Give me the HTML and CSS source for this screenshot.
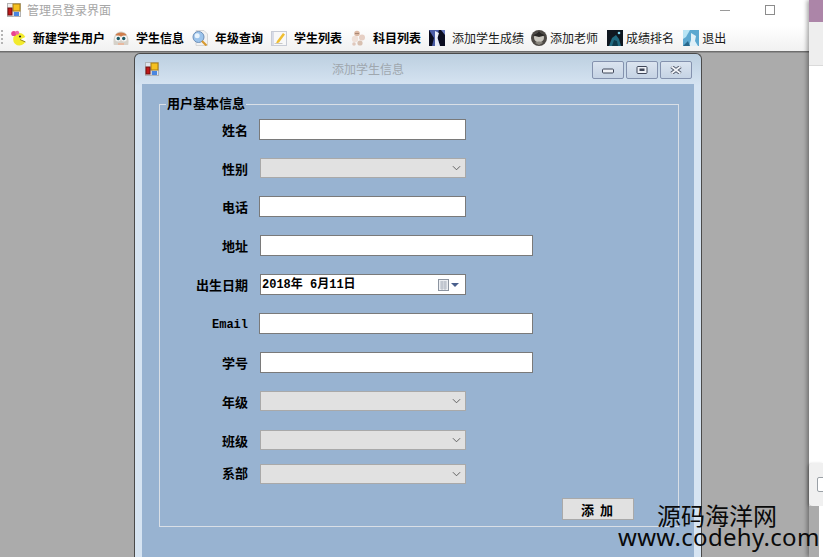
FILE: index.html
```html
<!DOCTYPE html>
<html lang="zh">
<head>
<meta charset="utf-8">
<title>管理员登录界面</title>
<link rel="stylesheet" href="styles.css">
</head>
<body>
<div class="screen">
  <div class="app">
    <header class="titlebar">
      <svg class="app-icon" viewBox="0 0 14 14"><rect x=".5" y=".5" width="13" height="13" fill="#efefef" stroke="#b4b4b4"/><path d="M0 7h14M7 0v14" stroke="#c8c8c8"/><rect x="6" y="1" width="7" height="7" fill="#f5c020" stroke="#a87c10"/><rect x="1" y="5" width="4" height="7" fill="#c01818" stroke="#701010"/><rect x="7" y="9" width="5" height="4" fill="#4a86e0"/></svg>
      <span class="app-title">管理员登录界面</span>
      <span class="winctl">
        <span class="wc-min"></span>
        <span class="wc-max"></span>
      </span>
    </header>
    <nav class="toolbar">
      <span class="grip"></span>
      <a class="tool b t1"><svg class="ti" viewBox="0 0 16 16"><path d="M8.500 3a6.300 6.300 0 1 1-.1 12.600A6.300 6.300 0 0 1 8.500 3z" fill="#f2ea2c"/><path d="M9 9.500l6.500-3v5.500z" fill="#fff"/><path d="M9 9.500l5.500 2.500" stroke="#7a6a10" stroke-width=".8"/><circle cx="2.800" cy="3.500" r="2.600" fill="#e9448f"/><circle cx="6.200" cy="2.800" r="2" fill="#f06aa8"/><circle cx="9" cy="6.500" r="1.100" fill="#222"/></svg>新建学生用户</a>
      <a class="tool b t2"><svg class="ti" viewBox="0 0 16 16"><path d="M.8 15C-.5 8 2 1.500 8 1.500S16.500 8 15.200 15z" fill="#d6d2ca"/><path d="M2.500 5C4 1.500 12 1.500 13.500 5l-3 1.500H5.500z" fill="#cf7d4d"/><circle cx="5" cy="8.500" r="3" fill="#f5f5f5"/><circle cx="11" cy="8.500" r="3" fill="#f5f5f5"/><circle cx="5.300" cy="8.500" r="1.700" fill="#1b5a66"/><circle cx="10.700" cy="8.500" r="1.700" fill="#1b5a66"/><path d="M5 13h6v2H5z" fill="#e8b9a0"/></svg>学生信息</a>
      <a class="tool b t3"><svg class="ti" viewBox="0 0 16 16"><path d="M4 .5h8l3.500 3.500v11.500H4z" fill="#f2f2f2" stroke="#c8c8c8" stroke-width=".7"/><circle cx="6.500" cy="7" r="5.500" fill="#9cc4ec" stroke="#6f90b8"/><circle cx="5.200" cy="5.700" r="2.500" fill="#e8f3fc"/><path d="M10 11l4.500 4.500" stroke="#d89a30" stroke-width="2.200"/></svg>年级查询</a>
      <a class="tool b t4"><svg class="ti" viewBox="0 0 16 16"><rect x=".5" y="1.500" width="15" height="14" fill="#f8f8f8" stroke="#c8ccd6"/><rect x="1" y="2" width="2" height="13" fill="#d8dce8"/><path d="M6 11l6-8 2 1.500-6 8-3 1z" fill="#f0be30"/><path d="M3.500 13.500h8" stroke="#c8c8c8"/></svg>学生列表</a>
      <a class="tool b t5"><svg class="ti" viewBox="0 0 16 16"><circle cx="7" cy="3.500" r="2.800" fill="#dcb9a4"/><circle cx="12" cy="7.500" r="3" fill="#e6cfc4"/><circle cx="5" cy="9" r="3.200" fill="#efe0d8"/><circle cx="10" cy="13" r="2.600" fill="#d8c0b0"/><circle cx="4" cy="14" r="1.800" fill="#e0c8bc"/><circle cx="6" cy="3.500" r=".6" fill="#6a4a3a"/><circle cx="8" cy="3.500" r=".6" fill="#6a4a3a"/></svg>科目列表</a>
      <a class="tool t6"><svg class="ti" viewBox="0 0 16 16"><rect width="16" height="16" fill="#0b0d20"/><path d="M0 0h10L8 6l3 10H3l2-8z" fill="#4a5ca6"/><path d="M6 1l4 2-1.500 5L11 16H6z" fill="#e8ecf8"/><path d="M12 0h4v5z" fill="#6a7cc0"/></svg>添加学生成绩</a>
      <a class="tool t7"><svg class="ti" viewBox="0 0 16 16"><circle cx="8" cy="8" r="8" fill="#4d4945"/><circle cx="8" cy="7.500" r="5" fill="#c9c6be"/><path d="M2 5.500l6-4 6 4-6 1.500z" fill="#2a2826"/><path d="M4 13c2-2 6-2 8 0l-4 2z" fill="#8a867e"/></svg>添加老师</a>
      <a class="tool t8"><svg class="ti" viewBox="0 0 16 16"><rect width="16" height="16" fill="#101820"/><path d="M2 16l3-8 4-3 3 4 2 7z" fill="#1f6a80"/><path d="M5 16l2-6 3 1 1 5z" fill="#0d3a4a"/><circle cx="12" cy="3" r="1.300" fill="#80d8f0"/></svg>成绩排名</a>
      <a class="tool t9"><svg class="ti" viewBox="0 0 16 16"><rect width="16" height="16" fill="#5ca8d0"/><path d="M0 0h7L3 7 0 9z" fill="#b8e4f4"/><path d="M8 3l5 3-1 5 3 5H6l2-6z" fill="#e0f0f8"/><path d="M0 16l5-5 2 5z" fill="#28688c"/></svg>退出</a>
    </nav>
    <main class="mdi">
      <section class="child">
        <div class="child-title">
          <svg class="child-icon" viewBox="0 0 14 14"><rect x=".5" y=".5" width="13" height="13" fill="#dfe5ec" stroke="#b0b4b8"/><path d="M0 7h14M7 0v14" stroke="#b8bcc0"/><rect x="6" y="1" width="7" height="7" fill="#f5c020" stroke="#a87c10"/><rect x="1" y="5" width="4" height="7" fill="#c01818" stroke="#701010"/><rect x="7" y="9" width="5" height="4" fill="#4a86e0"/></svg>
          <span class="child-name">添加学生信息</span>
          <span class="caption">
            <span class="capbtn"><svg viewBox="0 0 12 8"><rect x=".5" y="3" width="11" height="4" rx="1" fill="#eef1f6" stroke="#3f4658"/></svg></span>
            <span class="capbtn"><svg viewBox="0 0 12 8"><rect x="1" y=".5" width="10" height="7" rx="1" fill="#eef1f6" stroke="#3f4658"/><rect x="3.500" y="2.500" width="5" height="2.500" fill="#3f4658"/></svg></span>
            <span class="capbtn"><svg viewBox="0 0 12 8"><path d="M1.500 .5l9 7M10.500 .5l-9 7" stroke="#50586a" stroke-width="3.600"/><path d="M1.500 .5l9 7M10.500 .5l-9 7" stroke="#f2f4f8" stroke-width="1.800"/></svg></span>
          </span>
        </div>
        <div class="client">
          <fieldset class="group">
            <legend>用户基本信息</legend>
            <div class="form">
              <label>姓名</label><span class="input short"></span>
              <label>性别</label><span class="select"><svg viewBox="0 0 10 6"><path d="M1 1l4 4 4-4" fill="none" stroke="#555"/></svg></span>
              <label>电话</label><span class="input short"></span>
              <label>地址</label><span class="input long"></span>
              <label>出生日期</label><span class="input date"><span class="date-text">2018年 6月11日</span><svg class="cal" viewBox="0 0 11 12"><rect x=".5" y=".5" width="10" height="11" fill="#eceef2" stroke="#8c94a0"/><path d="M2 3h7M2 5h7M2 7h7M2 9h7M4 2v9M7 2v9" stroke="#aab0bc" stroke-width=".8"/></svg><svg class="drop" viewBox="0 0 8 4"><path d="M0 0h8L4 4z" fill="#4a5f8c"/></svg></span>
              <label class="mono">Email</label><span class="input wide"></span>
              <label>学号</label><span class="input long"></span>
              <label>年级</label><span class="select"><svg viewBox="0 0 10 6"><path d="M1 1l4 4 4-4" fill="none" stroke="#555"/></svg></span>
              <label>班级</label><span class="select"><svg viewBox="0 0 10 6"><path d="M1 1l4 4 4-4" fill="none" stroke="#555"/></svg></span>
              <label class="low">系部</label><span class="select"><svg viewBox="0 0 10 6"><path d="M1 1l4 4 4-4" fill="none" stroke="#555"/></svg></span>
            </div>
            <div class="actions"><button class="add" type="button">添 加</button></div>
          </fieldset>
        </div>
      </section>
    </main>
  </div>
  <aside class="side">
    <div class="side-top"></div>
    <div class="side-strip"></div>
    <div class="side-fill"></div>
    <div class="side-card"><span class="check"></span></div>
    <div class="side-bottom"></div>
  </aside>
  <div class="watermark"><div class="wm-cn">源码海洋网</div><div class="wm-en">www.codehy.com</div></div>
</div>
</body>
</html>
```

FILE: styles.css
```css
* { box-sizing: border-box; }
html, body { margin: 0; padding: 0; width: 823px; height: 557px; overflow: hidden; background: #fff; }
.screen { position: relative; display: flex; width: 823px; height: 557px; overflow: hidden; font-family: "Noto Sans CJK SC", "Liberation Sans", sans-serif; }
.app { width: 809px; height: 557px; flex: none; display: flex; flex-direction: column; }
.titlebar { height: 26px; flex: none; display: flex; align-items: center; background: #fff; padding: 0 0 6px 7px; }
.app-icon { width: 14px; height: 14px; }
.app-title { margin-left: 6px; font-size: 12px; line-height: 16px; color: #a6a6a6; }
.winctl { margin-left: auto; display: flex; align-items: center; margin-right: 34px; }
.wc-min { width: 10px; height: 1px; background: #9a9a9a; margin-right: 35px; }
.wc-max { width: 10px; height: 10px; border: 1px solid #8c8c8c; }
.toolbar { height: 26px; flex: none; display: flex; align-items: center; padding: 0 0 2px 1px; background: linear-gradient(#ffffff, #f1f1f1); border-bottom: 1px solid #6d6d6d; box-shadow: 0 1px 0 #8d8d8d; position: relative; }
.grip { width: 2px; height: 16px; margin-right: 8px; background: repeating-linear-gradient(#b4b4b4 0 2px, transparent 2px 4px); }
.tool { display: flex; align-items: center; font-size: 12px; line-height: 16px; color: #1a1a1a; white-space: nowrap; }
.tool.b { color: #000; font-weight: 700; }
.ti { width: 16px; height: 16px; flex: none; margin-right: 7px; }
.t1 .ti { margin-right: 6px; }
.t2, .t3, .t4, .t5, .t6 { margin-left: 8px; }
.t7 { margin-left: 7px; }
.t8, .t9 { margin-left: 9px; }
.t7 .ti, .t8 .ti, .t9 .ti { margin-right: 3px; }
.mdi { flex: 1; background: #ababab; padding: 1px 0 0 134px; overflow: hidden; }
.child { width: 568px; height: 520px; background: linear-gradient(#bccfe0 0, #d6e4f2 32px, #d6e4f2 100%); border: 1px solid #4a4a4a; border-bottom: 0; border-radius: 6px 6px 0 0; padding: 0 7px; display: flex; flex-direction: column; }
.child-title { height: 30px; flex: none; display: flex; align-items: center; margin: 0 0 0 2px; position: relative; }
.child-icon { width: 14px; height: 14px; margin-left: 1px; }
.child-name { position: absolute; left: 188px; top: 7px; font-size: 12px; line-height: 16px; color: #9fa7ae; }
.caption { margin-left: auto; display: flex; gap: 2px; margin-right: 2px; margin-top: 2px; }
.capbtn { width: 32px; height: 18px; border: 1px solid #8492ae; border-radius: 2px; background: linear-gradient(#dbe4ef, #c5d3e4); display: flex; align-items: center; justify-content: center; }
.capbtn svg { width: 12px; height: 8px; }
.client { flex: 1; background: #98b3d1; padding: 20px 14px 0 17px; }
.group { margin: 0; width: 520px; height: 423px; border: 1px solid #d9dfe6; padding: 0; position: relative; }
.group legend { position: absolute; left: 6px; top: -10px; padding: 0 1px; background: #98b3d1; font-size: 13px; font-weight: 700; line-height: 16px; color: #000; }
.form { display: grid; grid-template-columns: 88px auto; grid-template-rows: 39px 38px 39px 39px 39px 39px 39px 39px 34px 20px; column-gap: 11px; padding-top: 14px; justify-items: start; align-items: start; }
.form label { justify-self: end; font-size: 13px; font-weight: 700; line-height: 21px; color: #000; white-space: nowrap; }
.form label.mono { font-family: "Liberation Mono", monospace; font-size: 12px; line-height: 25px; }
.form label.low { line-height: 18px; }
.input { display: flex; align-items: center; height: 21px; background: #fff; border: 1px solid #7a7a7a; }
.short { width: 207px; }
.wide { width: 274px; }
.long { width: 273px; margin-left: 1px; }
.select { display: flex; align-items: center; justify-content: flex-end; width: 206px; height: 20px; background: #e1e1e1; border: 1px solid #a9a9a9; padding-right: 2px; margin-left: 1px; }
.select svg { width: 9px; height: 6px; margin-right: 2px; }
.date { margin-left: 1px; width: 206px; padding: 0 6px 0 1px; }
.date-text { font-family: "Liberation Mono", "Noto Sans CJK SC", monospace; font-size: 12px; font-weight: 700; line-height: 16px; color: #000; white-space: nowrap; }
.cal { width: 11px; height: 12px; margin-left: auto; }
.drop { width: 8px; height: 4px; margin-left: 2px; }
.actions { display: flex; justify-content: flex-end; padding: 14px 44px 0 0; }
.add { width: 72px; height: 22px; padding: 0 2px 0 0; background: #e1e1e1; border: 1px solid #a9a9a9; font-family: "Noto Sans CJK SC", sans-serif; font-size: 13px; font-weight: 700; word-spacing: 3px; color: #000; }
.side { width: 14px; flex: none; display: flex; flex-direction: column; box-shadow: -2px 0 4px rgba(0,0,0,.35); position: relative; z-index: 1; }
.side-top { height: 22px; background: #ac85a8; }
.side-strip { height: 44px; background: #eeeeee; border-bottom: 1px solid #dadada; }
.side-fill { height: 397px; background: #fff; }
.side-card { height: 43px; background: #f0f0f0; border-radius: 4px 0 0 4px; padding: 14px 0 0 8px; box-shadow: -1px 1px 3px rgba(0,0,0,.3); }
.check { display: block; width: 14px; height: 15px; border: 1px solid #9aa0a6; border-radius: 2px; background: #fff; }
.side-bottom { flex: 1; background: linear-gradient(90deg, #ababab 10px, #fff 10px); }
.watermark { position: absolute; left: 618px; top: 503px; z-index: 2; color: #0a0a0a; }
.wm-cn { font-size: 24px; line-height: 24px; padding-left: 39px; }
.wm-en { font-family: "Noto Sans", sans-serif; font-size: 24px; line-height: 20px; letter-spacing: .3px; white-space: nowrap; }
```
